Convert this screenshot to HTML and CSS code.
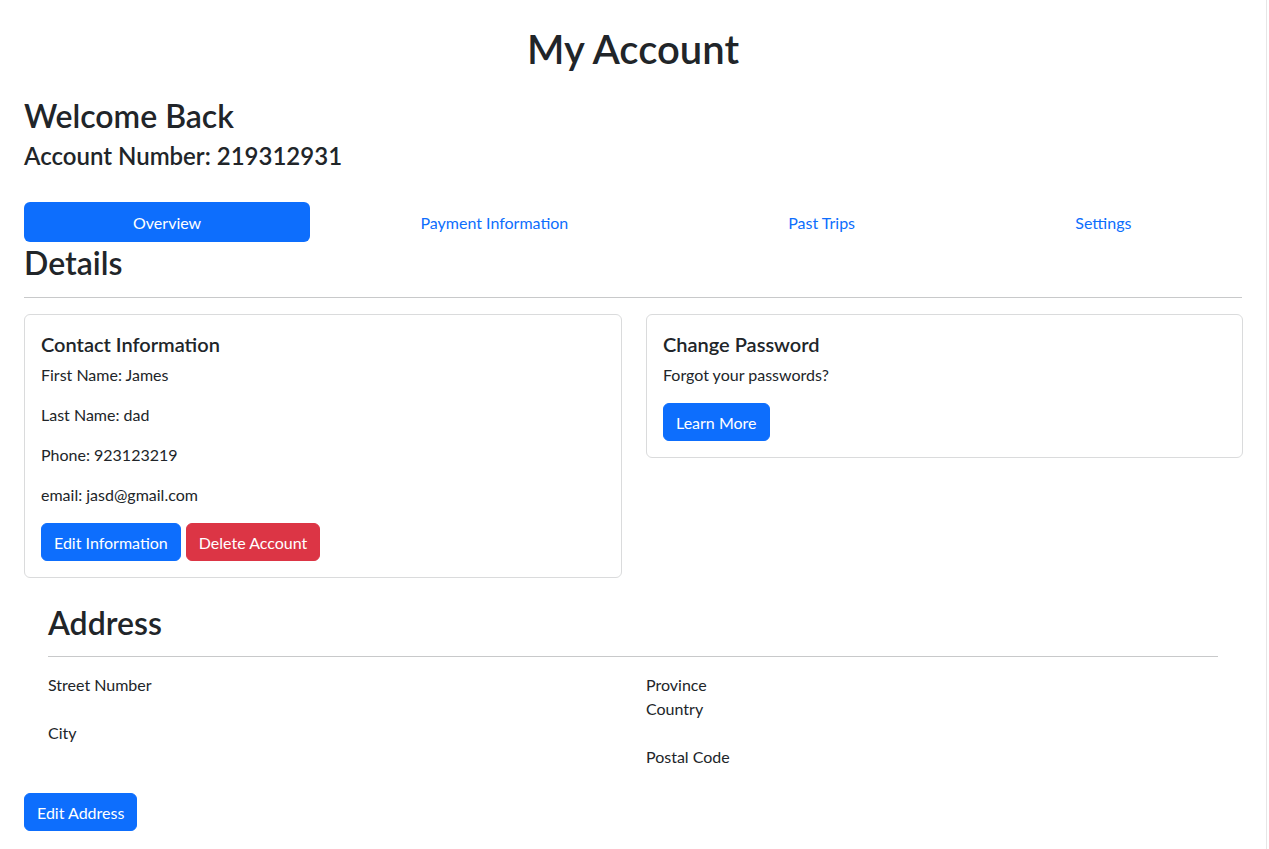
FILE: index.html
```html
<!DOCTYPE html>
<html lang="en">
<head>
<meta charset="utf-8">
<title>My Account</title>
<link rel="stylesheet" href="styles.css">
</head>
<body>
<div class="page">
  <h1 class="title">My Account</h1>
  <h2 class="welcome">Welcome Back</h2>
  <h4 class="account">Account Number: 219312931</h4>

  <nav class="tabs">
    <a class="tab tab-overview active" href="#">Overview</a>
    <a class="tab tab-payment" href="#">Payment Information</a>
    <a class="tab tab-trips" href="#">Past Trips</a>
    <a class="tab tab-settings" href="#">Settings</a>
  </nav>

  <h2 class="section-title">Details</h2>
  <hr class="rule">

  <div class="cards">
    <div class="card">
      <h5 class="card-title">Contact Information</h5>
      <p class="line">First Name: James</p>
      <p class="line">Last Name: dad</p>
      <p class="line">Phone: 923123219</p>
      <p class="line">email: jasd@gmail.com</p>
      <div class="btn-row">
        <button class="btn btn-primary">Edit Information</button>
        <button class="btn btn-danger">Delete Account</button>
      </div>
    </div>
    <div class="card card-short">
      <h5 class="card-title">Change Password</h5>
      <p class="line">Forgot your passwords?</p>
      <div class="btn-row">
        <button class="btn btn-primary">Learn More</button>
      </div>
    </div>
  </div>

  <section class="address">
    <h2 class="section-title">Address</h2>
    <hr class="rule">
    <div class="address-grid">
      <div class="address-col">
        <p class="field gap">Street Number</p>
        <p class="field">City</p>
      </div>
      <div class="address-col">
        <p class="field">Province</p>
        <p class="field gap">Country</p>
        <p class="field">Postal Code</p>
      </div>
    </div>
  </section>

  <button class="btn btn-primary">Edit Address</button>
</div>
</body>
</html>
```
FILE: styles.css
```css
* { box-sizing: border-box; }

html, body {
  margin: 0;
  background: #fff;
}

body {
  font-family: Lato, "Open Sans", sans-serif;
  font-size: 16px;
  line-height: 1.5;
  color: #212529;
}

.page {
  width: 1267px;
  min-height: 849px;
  padding: 0 24px 20px;
  border-right: 1px solid #e6e6e6;
}

h1, h2, h4, h5 {
  font-weight: 600;
  line-height: 1.2;
  margin: 0;
}

.title {
  font-size: 40px;
  text-align: center;
  padding-top: 25px;
  margin-bottom: 24px;
}

.welcome {
  font-size: 32px;
  margin-bottom: 7px;
}

.account {
  font-size: 24px;
  margin-bottom: 31px;
}

.tabs {
  display: flex;
  height: 40px;
}

.tab {
  display: block;
  text-align: center;
  padding: 9px 16px 7px;
  color: #0d6efd;
  text-decoration: none;
  border-radius: 6px;
  font-size: 16px;
  line-height: 24px;
  white-space: nowrap;
}

.tab-overview { flex: 1 1 98px; }
.tab-payment { flex: 1 1 180px; }
.tab-trips { flex: 1 1 98px; }
.tab-settings { flex: 1 1 89px; }

.tab.active {
  background: #0d6efd;
  color: #fff;
}

.section-title {
  font-size: 32px;
  height: 38.4px;
  padding-top: 2px;
}

.rule {
  margin: 16px 0;
  border: 0;
  border-top: 1px solid #c8c9ca;
  height: 0;
}

.cards {
  display: grid;
  grid-template-columns: 598px 597px;
  gap: 24px;
  align-items: start;
}

.card {
  border: 1px solid #dadbdc;
  border-radius: 6px;
  padding: 16px;
}

.card-title {
  font-size: 20px;
  margin-bottom: 8px;
  padding-top: 1px;
  height: 24px;
}

.line {
  margin: 0 0 16px;
}

.btn-row {
  display: flex;
  gap: 5px;
}

.btn {
  font-family: inherit;
  font-size: 16px;
  line-height: 24px;
  padding: 7px 12px 5px;
  border: 1px solid transparent;
  border-radius: 6px;
  color: #fff;
  cursor: pointer;
}

.btn-primary {
  background: #0d6efd;
  border-color: #0d6efd;
}

.btn-danger {
  background: #dc3545;
  border-color: #dc3545;
}

.address {
  padding: 24px 24px 0;
}

.address-grid {
  display: grid;
  grid-template-columns: 574px 1fr;
  gap: 24px;
  margin-bottom: 24px;
}

.field {
  margin: 0;
}

.field.gap {
  margin-bottom: 24px;
}
```
